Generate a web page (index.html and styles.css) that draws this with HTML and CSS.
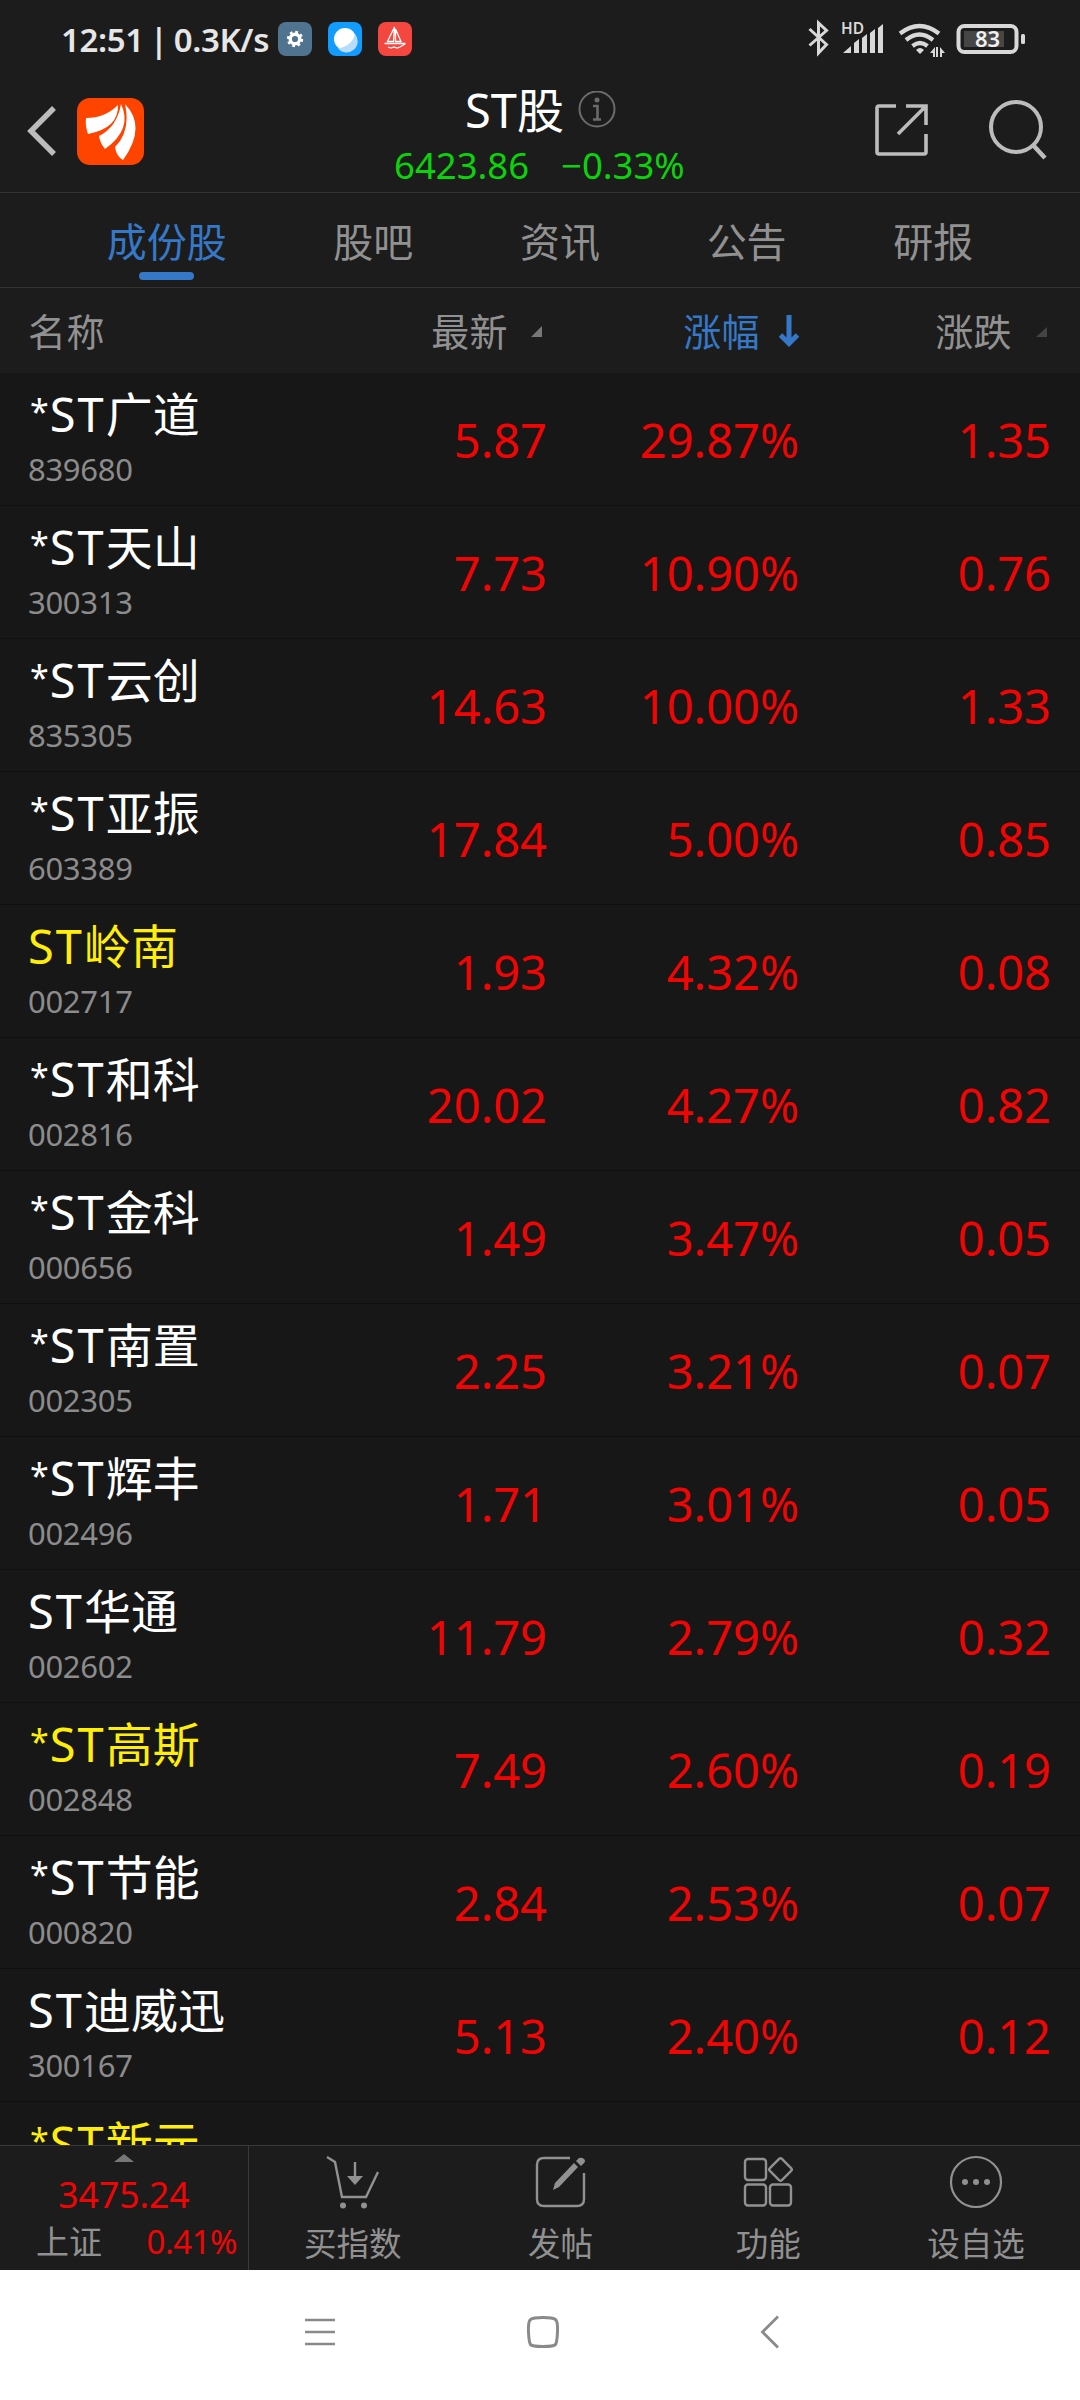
FILE: index.html
```html
<!DOCTYPE html>
<html lang="zh-CN">
<head>
    <meta charset="UTF-8">
    <meta name="viewport" content="width=device-width, initial-scale=1.0">
    <title>ST股</title>
    <link rel="stylesheet" href="styles.css">
</head>
<body>
<div class="status-bar">
    <span class="status-time">12:51 | 0.3K/s</span>
    <div class="status-apps">
        <svg width="34" height="34" viewBox="0 0 34 34">
            <rect width="34" height="34" rx="8" fill="#50738f"/>
            <circle cx="17" cy="17" r="4.8" fill="none" stroke="#fff" stroke-width="3.4"/>
            <circle cx="17" cy="17" r="7" fill="none" stroke="#fff" stroke-width="2.4" stroke-dasharray="2.75 2.75"/>
        </svg>
        <svg width="34" height="34" viewBox="0 0 34 34">
            <rect width="34" height="34" rx="8" fill="#129cff"/>
            <circle cx="17" cy="17" r="11" fill="#fff"/>
            <path d="M27 12a11 11 0 0 1-17 14.500C19 25 25 20 27 12z" fill="#b9dcfb"/>
        </svg>
        <svg width="34" height="34" viewBox="0 0 34 34">
            <rect width="34" height="34" rx="8" fill="#f4473f"/>
            <path d="M16.500 5L9.500 19.500h6zM17.500 7l5.500 12.500h-5.500zM6.500 21.500h21M10 25l3 1 3-1 3 1 3-1 5-3" fill="none" stroke="#fff" stroke-width="1.300"/>
        </svg>
    </div>
    <svg class="status-icons" width="222" height="40" viewBox="0 0 222 40">
        <path d="M1.500 12l17 15.500L10.500 36V6l8 7.500L1.500 28.500" fill="none" stroke="#d8d8d8" stroke-width="3"/>
        <text class="hd" x="33" y="17">HD</text>
        <path d="M35 36l8-7v7zM46 26l5-4v14h-5zM54 21l5-4v19h-5zM62 16l5-4v24h-5zM70 11l5-4v29h-5z" fill="#d8d8d8"/>
        <path d="M92 16.500q19.500-15 39 0M98 23q13.500-11 27 0M104.500 29q7.500-6 15 0" fill="none" stroke="#d8d8d8" stroke-width="4.200"/>
        <path d="M108 33q4-4 8 0l-4 4zM127 30v10h-2v-4h-3zM130 30v10h-2V30zM132 30l5 6h-3v4h-2z" fill="#d8d8d8"/>
        <rect x="150.500" y="9" width="58" height="26" rx="6" fill="none" stroke="#d8d8d8" stroke-width="4"/>
        <rect x="156" y="14" width="40" height="16" fill="#464646"/>
        <rect x="213" y="17" width="4" height="10" rx="1.500" fill="#d8d8d8"/>
        <text class="battery" x="167" y="30">83</text>
    </svg>
</div>

<div class="title-bar">
    <svg class="back" width="30" height="52" viewBox="0 0 30 52"><path d="M27 3L4 26l23 23" fill="none" stroke="#bcbcbc" stroke-width="5.500"/></svg>
    <svg class="logo" width="67" height="67" viewBox="0 0 67 67">
        <rect width="67" height="67" rx="13" fill="#ff4400"/>
        <path d="M9 20Q28 20 41 7Q42 30 11 36Q8 28 9 20z" fill="#fff"/>
        <path d="M22 38Q40 29 44 6Q56 31 28 51Q23 45 22 38z" fill="#fff"/>
        <path d="M38 49Q54 33 48 6Q70 29 46 62Q39 58 38 49z" fill="#fff"/>
    </svg>
    <div class="title">
        <div class="title-name">
            <span>ST股</span>
            <svg width="38" height="38" viewBox="0 0 38 38">
                <circle cx="19" cy="18" r="17.500" fill="none" stroke="#6c6c6c" stroke-width="2"/>
                <circle cx="19" cy="9" r="2.500" fill="#6c6c6c"/>
                <path d="M15 15h4.500v13M15 28.500h8" fill="none" stroke="#6c6c6c" stroke-width="2.500"/>
            </svg>
        </div>
        <div class="title-quote"><span>6423.86</span><span>−0.33%</span></div>
    </div>
    <div class="title-actions">
        <svg width="54" height="54" viewBox="0 0 54 54"><path d="M22 3H5Q3 3 3 5v44q0 2 2 2h45q2 0 2-2V31M32 3h20v19M51 4L24 31" fill="none" stroke="#bcbcbc" stroke-width="3.600"/></svg>
        <svg width="60" height="60" viewBox="0 0 60 60"><circle cx="28" cy="27" r="25" fill="none" stroke="#bcbcbc" stroke-width="4"/><path d="M45 45l12 13" stroke="#bcbcbc" stroke-width="4.500"/></svg>
    </div>
</div>

<div class="tabs">
    <span class="tab active">成份股</span>
    <span class="tab">股吧</span>
    <span class="tab">资讯</span>
    <span class="tab">公告</span>
    <span class="tab">研报</span>
</div>

<div class="row list-header">
    <span>名称</span>
    <span class="col">最新<svg class="sort" width="12" height="12" viewBox="0 0 12 12"><path d="M11 0v11H0z" fill="#777"/></svg></span>
    <span class="col sorted">涨幅<svg class="arrow" width="20" height="32" viewBox="0 0 20 32"><path d="M10 0v27M1.500 20l8.500 8.500 8.500-8.500" fill="none" stroke="#3678c8" stroke-width="5"/></svg></span>
    <span class="col">涨跌<svg class="sort" width="12" height="12" viewBox="0 0 12 12"><path d="M12 1v10H1z" fill="#444"/></svg></span>
</div>

<div class="list" id="list"></div>

<div class="bottom-bar">
    <div class="index">
        <svg class="index-arrow" width="20" height="8" viewBox="0 0 20 8"><path d="M0 8L10 0l10 8z" fill="#777"/></svg>
        <div class="index-value">3475.24</div>
        <div class="index-line"><span class="index-name">上证</span><span class="index-percent">0.41%</span></div>
    </div>
    <div class="action">
        <svg width="54" height="54" viewBox="0 0 54 54">
            <path d="M1 2l8 5 7 35h24l12-25M29 7v17" fill="none" stroke="#919191" stroke-width="2.400"/>
            <path d="M21 21h16l-8 9z" fill="#919191"/>
            <circle cx="17" cy="50.500" r="3" fill="#919191"/><circle cx="38" cy="50.500" r="3" fill="#919191"/>
        </svg>
        <span>买指数</span>
    </div>
    <div class="action">
        <svg width="54" height="54" viewBox="0 0 54 54">
            <path d="M36 3H10q-7 0-7 7v34q0 7 7 7h33q7 0 7-7V18" fill="none" stroke="#919191" stroke-width="2.400"/>
            <path d="M19 35l2-7 19-20 4 4-19 20zM42 6l3-3q3-1 5 1t0 4l-3 3z" fill="#919191"/>
        </svg>
        <span>发帖</span>
    </div>
    <div class="action">
        <svg width="54" height="54" viewBox="0 0 54 54">
            <g fill="none" stroke="#919191" stroke-width="2.400">
                <rect x="4" y="4" width="21" height="21" rx="3"/>
                <rect x="4" y="29.500" width="21" height="21" rx="3"/>
                <rect x="29" y="29.500" width="21" height="21" rx="3"/>
                <rect x="31" y="6" width="17" height="17" rx="2" transform="rotate(45 39.500 14.500)"/>
            </g>
        </svg>
        <span>功能</span>
    </div>
    <div class="action">
        <svg width="54" height="54" viewBox="0 0 54 54">
            <circle cx="27" cy="27" r="25" fill="none" stroke="#919191" stroke-width="2.200"/>
            <g fill="#919191"><circle cx="16" cy="27" r="3"/><circle cx="27" cy="27" r="3"/><circle cx="38" cy="27" r="3"/></g>
        </svg>
        <span>设自选</span>
    </div>
</div>

<div class="nav-bar">
    <svg width="34" height="34" viewBox="0 0 34 34"><path d="M2 5h30M2 17h30M2 29h30" stroke="#8a8a8a" stroke-width="2.500"/></svg>
    <svg width="34" height="34" viewBox="0 0 34 34"><path d="M17 2.500Q27 2.500 29.500 4.500T31.500 17T29.500 29.500T17 31.500T4.500 29.500T2.500 17T4.500 4.500T17 2.500z" fill="none" stroke="#8a8a8a" stroke-width="3"/></svg>
    <svg width="34" height="34" viewBox="0 0 34 34"><path d="M25 1.500L9.500 17 25 32.500" fill="none" stroke="#8a8a8a" stroke-width="2.800"/></svg>
</div>

<script>
    // name, code, price, change %, change, highlighted
    const stocks = [
        ['*ST广道', '839680', '5.87', '29.87%', '1.35'],
        ['*ST天山', '300313', '7.73', '10.90%', '0.76'],
        ['*ST云创', '835305', '14.63', '10.00%', '1.33'],
        ['*ST亚振', '603389', '17.84', '5.00%', '0.85'],
        ['ST岭南', '002717', '1.93', '4.32%', '0.08', true],
        ['*ST和科', '002816', '20.02', '4.27%', '0.82'],
        ['*ST金科', '000656', '1.49', '3.47%', '0.05'],
        ['*ST南置', '002305', '2.25', '3.21%', '0.07'],
        ['*ST辉丰', '002496', '1.71', '3.01%', '0.05'],
        ['ST华通', '002602', '11.79', '2.79%', '0.32'],
        ['*ST高斯', '002848', '7.49', '2.60%', '0.19', true],
        ['*ST节能', '000820', '2.84', '2.53%', '0.07'],
        ['ST迪威迅', '300167', '5.13', '2.40%', '0.12'],
        ['*ST新元', '', '', '', '', true],
    ];

    document.getElementById('list').innerHTML = stocks.map(([name, code, price, percent, change, marked]) => `
        <div class="row stock">
            <div>
                <div class="stock-name${marked ? ' marked' : ''}">${name.replace('*', '<span class="star">*</span>').replace('ST', '<span class="prefix">ST</span>')}</div>
                <div class="stock-code">${code}</div>
            </div>
            <span class="value">${price}</span>
            <span class="value">${percent}</span>
            <span class="value">${change}</span>
        </div>`).join('');
</script>
</body>
</html>
```
FILE: styles.css
```css
* {
    box-sizing: border-box;
}

body {
    margin: 0;
    width: 1080px;
    height: 2400px;
    overflow: hidden;
    display: flex;
    flex-direction: column;
    background-color: #1c1c1c;
    color: #919191;
    font-family: "Noto Sans", "Noto Sans CJK SC", sans-serif;
}

svg {
    display: block;
    flex: none;
}

.status-bar {
    display: flex;
    height: 78px;
    padding: 0 50px 0 61px;
}

.status-time {
    width: 217px;
    padding-top: 17px;
    color: #e6e6e6;
    font-size: 33px;
    font-weight: 600;
    line-height: 46px;
    letter-spacing: -0.4px;
    word-spacing: -2px;
    white-space: nowrap;
}

.status-apps {
    display: flex;
    gap: 16px;
    padding-top: 22px;
}

.status-icons {
    margin-top: 17px;
    margin-left: auto;
}

.hd {
    fill: #d8d8d8;
    font-size: 15.5px;
    font-weight: 600;
}

.battery {
    fill: #f0f0f0;
    font-size: 22px;
    font-weight: 600;
}

.title-bar {
    display: grid;
    grid-template-columns: 50px 67px 1fr 206px;
    height: 115px;
    padding-left: 27px;
    border-bottom: 1px solid #333;
}

.back {
    margin-top: 27px;
}

.logo {
    margin-top: 20px;
}

.title {
    padding-left: 250px;
}

.title-name {
    display: flex;
    align-items: center;
    gap: 14px;
    padding-left: 71px;
    height: 64px;
    color: #fff;
    font-size: 47px;
    line-height: 64px;
}

.title-quote {
    display: flex;
    gap: 32px;
    color: #0cd20c;
    font-size: 36.5px;
    line-height: 46px;
}

.title-actions {
    display: flex;
    gap: 60px;
    padding-top: 25px;
}

.title-actions svg + svg {
    margin-top: -3px;
}

.tabs {
    display: flex;
    justify-content: space-evenly;
    height: 95px;
    border-bottom: 1px solid #333;
}

.tab {
    display: flex;
    flex-direction: column;
    align-items: center;
    height: 94px;
    padding-top: 19px;
    font-size: 40px;
    line-height: 60px;
}

.tab.active {
    color: #3678c8;
}

.tab.active::after {
    content: "";
    width: 55px;
    height: 8px;
    border-radius: 4px;
    background-color: #3678c8;
}

.row {
    display: grid;
    grid-template-columns: 230px 289px 252px 252px;
    padding-left: 28px;
}

.list-header {
    flex: none;
    height: 85px;
    font-size: 38px;
    line-height: 87px;
    letter-spacing: 0.4px;
}

.col {
    display: flex;
    justify-content: flex-end;
}

.sort {
    margin: 38px 4px 0 23px;
}

.arrow {
    margin: 27px 0 0 19px;
}

.sorted {
    color: #3678c8;
}

.list {
    flex: none;
    height: 1772px;
    overflow: hidden;
    background-color: #171717;
}

.stock {
    height: 133px;
    border-bottom: 1px solid #101010;
}

.stock-name {
    height: 74px;
    padding-top: 8px;
    color: #fff;
    font-size: 47px;
    line-height: 66px;
    white-space: nowrap;
}

.stock-name.marked {
    color: #ffee0a;
}

.star {
    padding: 0 1px 0 2px;
    font-size: 34px;
    line-height: 0;
    vertical-align: 8px;
}

.prefix {
    letter-spacing: 2px;
}

.stock-code {
    font-size: 31px;
    line-height: 44px;
    letter-spacing: -0.3px;
    color: #8c8c8c;
}

.value {
    color: #f00505;
    font-size: 47px;
    line-height: 135px;
    text-align: right;
}

.bottom-bar {
    display: flex;
    flex: none;
    height: 125px;
    border-top: 1px solid #3a3a3a;
}

.index {
    width: 249px;
    border-right: 1px solid #3a3a3a;
    color: #f00505;
}

.index-arrow {
    margin: 8px 0 0 114px;
}

.index-value {
    font-size: 35.5px;
    line-height: 64px;
    text-align: center;
}

.index-line {
    display: flex;
    justify-content: space-between;
    padding: 0 11px 0 36px;
    font-size: 33px;
    line-height: 31px;
}

.index-name {
    color: #919191;
}

.index-percent {
    letter-spacing: -0.5px;
}

.action {
    display: flex;
    flex: 1;
    flex-direction: column;
    align-items: center;
    padding-top: 9px;
    font-size: 32.5px;
    line-height: 69px;
}

.nav-bar {
    display: flex;
    flex: none;
    gap: 190px;
    height: 130px;
    padding: 45px 0 0 303px;
    background-color: #fff;
}

.nav-bar svg:nth-child(2) {
    margin: 0 3px 0 -1px;
}
```
